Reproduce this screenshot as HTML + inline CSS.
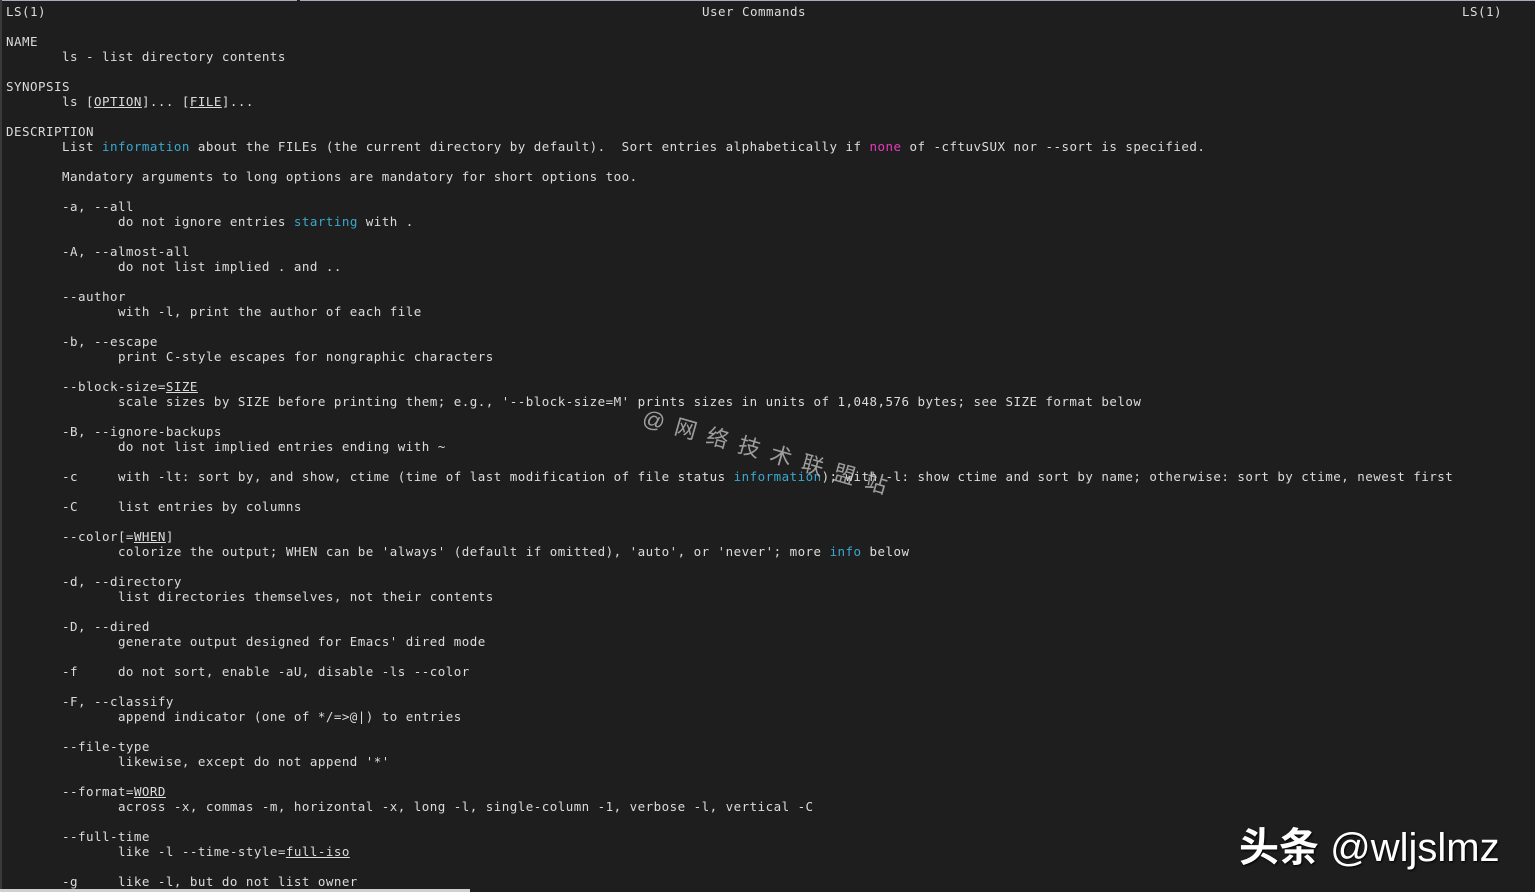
<!DOCTYPE html>
<html><head><meta charset="utf-8"><style>
html,body{margin:0;padding:0;}
body{width:1535px;height:892px;background:#1e1e1e;position:relative;overflow:hidden;}
pre,.h{font-family:"DejaVu Sans Mono","Liberation Mono",monospace;font-size:12.5px;letter-spacing:0.47px;line-height:15px;color:#dcdcdc;}
pre{position:absolute;left:6px;top:4px;margin:0;}
.c{color:#3aa8cf}.m{color:#e63bbf}u{text-decoration:underline}
.h{position:absolute;top:4px;}
.wm{position:absolute;left:648px;top:400px;font-family:"Liberation Sans","Noto Sans CJK SC",sans-serif;font-size:22px;color:rgba(200,200,200,0.75);letter-spacing:11px;transform:rotate(16deg);transform-origin:0 0;white-space:nowrap;}
.tt{position:absolute;left:1239px;top:815px;font-family:"Liberation Sans","Noto Sans CJK SC",sans-serif;font-size:40px;color:#fff;white-space:nowrap;text-shadow:1px 1px 2px #000;}
</style></head><body>
<div style="position:absolute;left:0;top:0;width:297px;height:1px;background:#aab"></div>
<div style="position:absolute;left:300px;top:0;width:1235px;height:1px;background:#aab"></div>
<div style="position:absolute;left:0;top:0;width:2px;height:892px;background:#3a3a3a"></div>
<div style="position:absolute;left:0;top:889px;width:470px;height:3px;background:#d0d0d0"></div>
<div class="h" style="left:702px">User Commands</div>
<div class="h" style="left:1462px">LS(1)</div>
<pre>LS(1)

NAME
       ls - list directory contents

SYNOPSIS
       ls [<u>OPTION</u>]... [<u>FILE</u>]...

DESCRIPTION
       List <span class="c">information</span> about the FILEs (the current directory by default).  Sort entries alphabetically if <span class="m">none</span> of -cftuvSUX nor --sort is specified.

       Mandatory arguments to long options are mandatory for short options too.

       -a, --all
              do not ignore entries <span class="c">starting</span> with .

       -A, --almost-all
              do not list implied . and ..

       --author
              with -l, print the author of each file

       -b, --escape
              print C-style escapes for nongraphic characters

       --block-size=<u>SIZE</u>
              scale sizes by SIZE before printing them; e.g., '--block-size=M' prints sizes in units of 1,048,576 bytes; see SIZE format below

       -B, --ignore-backups
              do not list implied entries ending with ~

       -c     with -lt: sort by, and show, ctime (time of last modification of file status <span class="c">information</span>); with -l: show ctime and sort by name; otherwise: sort by ctime, newest first

       -C     list entries by columns

       --color[=<u>WHEN</u>]
              colorize the output; WHEN can be 'always' (default if omitted), 'auto', or 'never'; more <span class="c">info</span> below

       -d, --directory
              list directories themselves, not their contents

       -D, --dired
              generate output designed for Emacs' dired mode

       -f     do not sort, enable -aU, disable -ls --color

       -F, --classify
              append indicator (one of */=>@|) to entries

       --file-type
              likewise, except do not append '*'

       --format=<u>WORD</u>
              across -x, commas -m, horizontal -x, long -l, single-column -1, verbose -l, vertical -C

       --full-time
              like -l --time-style=<u>full-iso</u>

       -g     like -l, but do not list owner</pre>
<div class="wm">@网络技术联盟站</div>
<div class="tt"><b>头条</b> @wljslmz</div>
</body></html>
